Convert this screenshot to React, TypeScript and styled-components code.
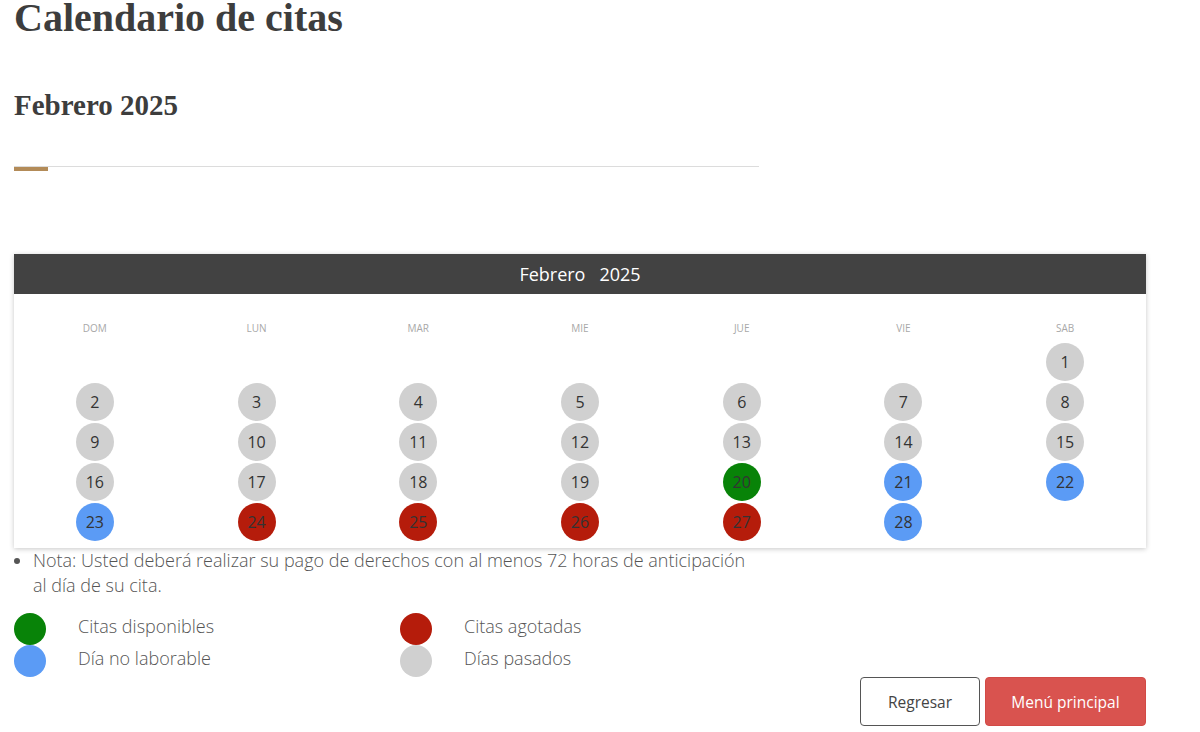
import styled, { createGlobalStyle } from "styled-components";

const GlobalStyle = createGlobalStyle`
  body {
    margin: 0;
    background: #ffffff;
    font-family: "Open Sans", "Liberation Sans", sans-serif;
    color: #3d3d3d;
  }
`;

type DayState = "past" | "free" | "full" | "off";

const COLORS: Record<DayState, string> = {
  past: "#d0d0d0",
  free: "#088308",
  full: "#b51c0b",
  off: "#5b9bf5",
};

const WEEKDAYS = ["DOM", "LUN", "MAR", "MIE", "JUE", "VIE", "SAB"];

function stateOf(day: number): DayState {
  if (day === 20) return "free";
  if (day >= 24 && day <= 27) return "full";
  if (day === 21 || day === 22 || day === 23 || day === 28) return "off";
  return "past";
}

// febrero 2025 empieza en sábado
const cells: (number | null)[] = [
  ...Array(6).fill(null),
  ...Array.from({ length: 28 }, (_, i) => i + 1),
];

const LEGEND: { state: DayState; label: string }[] = [
  { state: "free", label: "Citas disponibles" },
  { state: "full", label: "Citas agotadas" },
  { state: "off", label: "Día no laborable" },
  { state: "past", label: "Días pasados" },
];

export default function App() {
  return (
    <Page>
      <GlobalStyle />
      <Title>Calendario de citas</Title>
      <SubTitle>Febrero 2025</SubTitle>
      <Divider />

      <Card>
        <CardHeader>
          Febrero <span>2025</span>
        </CardHeader>
        <Grid>
          {WEEKDAYS.map((d) => (
            <WeekDay key={d}>{d}</WeekDay>
          ))}
          {cells.map((day, i) => (
            <Cell key={i}>
              {day !== null && <Day $state={stateOf(day)}>{day}</Day>}
            </Cell>
          ))}
        </Grid>
      </Card>

      <Notes>
        <li>
          Nota: Usted deberá realizar su pago de derechos con al menos 72 horas de anticipación
          al día de su cita.
        </li>
      </Notes>

      <Legend>
        {LEGEND.map((l) => (
          <LegendItem key={l.label}>
            <Dot $state={l.state} />
            {l.label}
          </LegendItem>
        ))}
      </Legend>

      <Actions>
        <OutlineButton type="button">Regresar</OutlineButton>
        <PrimaryButton type="button">Menú principal</PrimaryButton>
      </Actions>
    </Page>
  );
}

const Page = styled.div`
  width: 1132px;
  padding: 0 0 0 14px;
  display: flex;
  flex-direction: column;
`;

const Title = styled.h1`
  margin: 0;
  font-family: "Liberation Serif", "DejaVu Serif", serif;
  font-weight: bold;
  font-size: 40px;
  line-height: 36px;
  color: #3d3d3d;
`;

const SubTitle = styled.h2`
  margin: 52px 0 0;
  font-family: "Liberation Serif", "DejaVu Serif", serif;
  font-weight: bold;
  font-size: 29px;
  line-height: 34px;
  color: #3d3d3d;
`;

const Divider = styled.div`
  margin-top: 44px;
  width: 745px;
  height: 6px;
  border-top: 1px solid #dcdcdc;
  position: relative;

  &::before {
    content: "";
    position: absolute;
    left: 0;
    top: 0;
    width: 34px;
    height: 4px;
    background: #b38b58;
  }
`;

const Card = styled.section`
  margin-top: 81px;
  background: #fff;
  box-shadow: 0 1px 5px rgba(0, 0, 0, 0.22);
`;

const CardHeader = styled.div`
  height: 40px;
  background: #424242;
  color: #fff;
  font-size: 18px;
  display: flex;
  align-items: center;
  justify-content: center;

  span {
    margin-left: 14px;
  }
`;

const Grid = styled.div`
  display: grid;
  grid-template-columns: repeat(7, 1fr);
  grid-template-rows: 28px;
  grid-auto-rows: 40px;
  padding: 20px 0 6px;
`;

const WeekDay = styled.div`
  font-size: 10px;
  color: #a8a8a8;
  text-align: center;
  line-height: 28px;
`;

const Cell = styled.div`
  display: flex;
  justify-content: center;
  align-items: center;
`;

const Day = styled.div<{ $state: DayState }>`
  width: 38px;
  height: 38px;
  border-radius: 50%;
  background: ${(p) => COLORS[p.$state]};
  color: #333;
  font-size: 16px;
  display: flex;
  align-items: center;
  justify-content: center;
`;

const Notes = styled.ul`
  margin: 0;
  padding: 0 0 0 19px;
  width: 716px;
  font-size: 18px;
  line-height: 25px;
  color: #555;
  font-weight: 300;
`;

const Legend = styled.div`
  margin-top: 12px;
  display: grid;
  grid-template-columns: 386px 1fr;
  width: 745px;
`;

const LegendItem = styled.div`
  display: flex;
  align-items: center;
  height: 32px;
  font-size: 18px;
  font-weight: 300;
  color: #555;
`;

const Dot = styled.span<{ $state: DayState }>`
  width: 32px;
  height: 32px;
  border-radius: 50%;
  background: ${(p) => COLORS[p.$state]};
  margin-right: 32px;
  flex-shrink: 0;
  position: relative;
  top: 3px;
`;

const Actions = styled.div`
  margin-top: 3px;
  display: flex;
  justify-content: flex-end;
  gap: 5px;
`;

const BaseButton = styled.button`
  height: 49px;
  border-radius: 4px;
  font-family: "Open Sans", "Liberation Sans", sans-serif;
  font-size: 15.5px;
  cursor: pointer;
`;

const OutlineButton = styled(BaseButton)`
  width: 120px;
  background: #fff;
  color: #444;
  border: 1px solid #555;
`;

const PrimaryButton = styled(BaseButton)`
  width: 161px;
  background: #d9534f;
  color: #fff;
  border: 1px solid #d24a46;
`;
